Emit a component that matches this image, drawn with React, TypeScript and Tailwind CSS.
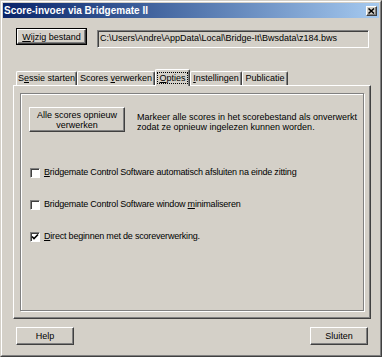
import React from 'react'

const font = { fontFamily: '"Liberation Sans", Arial, sans-serif' }

const raised =
  'border border-t-white border-l-white border-r-[#404040] border-b-[#404040] shadow-[inset_-1px_-1px_0_#808080] bg-[#d4d0c8]'

function Btn({ children, className = '' }: { children: React.ReactNode; className?: string }) {
  return (
    <div className={`${raised} flex items-center justify-center text-center leading-[10px] ${className}`}>
      {children}
    </div>
  )
}

function Check({ checked, children }: { checked?: boolean; children: React.ReactNode }) {
  return (
    <div className="flex items-center h-[12px]">
      <div className="w-[10px] h-[10px] bg-white border border-t-[#808080] border-l-[#808080] border-r-white border-b-white shadow-[inset_1px_1px_0_#404040] flex items-center justify-center">
        {checked && (
          <svg width="8" height="8" viewBox="0 0 8 8">
            <path d="M1 3.5 L3 5.5 L7 1.5" stroke="black" strokeWidth="1.6" fill="none" />
          </svg>
        )}
      </div>
      <span className="ml-[4px] tracking-[-0.2px]">{children}</span>
    </div>
  )
}

function Tab({ label, w, active }: { label: React.ReactNode; w: string; active?: boolean }) {
  return (
    <div
      className={`${w} border-t border-l border-t-white border-l-white border-r border-r-[#404040] shadow-[inset_-1px_0_0_#808080] rounded-t-[2px] bg-[#d4d0c8] flex items-center justify-center ${
        active ? 'h-[17px] relative z-10 -mb-px' : 'h-[14px] mt-[2px]'
      }`}
    >
      {active ? <span className="border border-dotted border-black px-[1px] leading-[10px]">{label}</span> : label}
    </div>
  )
}

export default function App() {
  return (
    <div
      style={font}
      className="w-[382px] h-[357px] bg-[#d4d0c8] text-[9px] text-black border border-t-[#d4d0c8] border-l-[#d4d0c8] border-r-[#404040] border-b-[#404040] overflow-hidden"
    >
      <div className="h-full border border-t-white border-l-white border-r-[#808080] border-b-[#808080] p-px flex flex-col">
        {/* title bar */}
        <div className="h-[15px] bg-gradient-to-r from-[#0a246a] to-[#a6caf0] flex items-center justify-between pl-[1px] pr-[2px]">
          <span className="text-white font-bold text-[10px] leading-none">Score-invoer via Bridgemate II</span>
          <div className={`${raised} w-[11px] h-[10px] flex items-center justify-center`}>
            <svg width="7" height="6" viewBox="0 0 7 6">
              <path d="M0.5 0.5 L6 5.5 M6 0.5 L0.5 5.5" stroke="black" strokeWidth="1.5" />
            </svg>
          </div>
        </div>

        {/* file row */}
        <div className="flex items-start mt-[10px] ml-[13px]">
          <div className="border border-black">
            <Btn className="w-[69px] h-[15px]">
              <span>
                <span className="underline">W</span>ijzig bestand
              </span>
            </Btn>
          </div>
          <div className="ml-[10px] mt-[2px] w-[272px] h-[18px] border border-t-[#808080] border-l-[#808080] border-r-white border-b-white shadow-[inset_1px_1px_0_#404040] flex items-center pl-[2px]">
            C:\Users\Andre\AppData\Local\Bridge-It\Bwsdata\z184.bws
          </div>
        </div>

        {/* tabs */}
        <div className="flex items-start mt-[21px] ml-[13px] h-[16px]">
          <Tab
            w="w-[61px]"
            label={
              <span>
                S<span className="underline">e</span>ssie starten
              </span>
            }
          />
          <Tab
            w="w-[78px]"
            label={
              <span>
                Scores <span className="underline">v</span>erwerken
              </span>
            }
          />
          <Tab
            w="w-[35px]"
            active
            label={
              <span>
                <span className="underline">O</span>pties
              </span>
            }
          />
          <Tab
            w="w-[52px]"
            label={
              <span>
                <span className="underline">I</span>nstellingen
              </span>
            }
          />
          <Tab w="w-[46px]" label="Publicatie" />
        </div>

        {/* panel */}
        <div className="ml-[10px] w-[358px] h-[234px] border border-t-white border-l-white border-r-[#404040] border-b-[#404040] shadow-[inset_-1px_-1px_0_#808080] pt-[7px] pl-[6px]">
          <div className="w-[344px] h-[218px] border border-[#808080] shadow-[1px_1px_0_white,inset_1px_1px_0_white] pl-[8px] pt-[13px]">
            <div className="flex items-start">
              <Btn className="w-[96px] h-[25px]">
                Alle scores opnieuw
                <br />
                verwerken
              </Btn>
              <div className="ml-[12px] mt-[5px] leading-[10px]">
                Markeer alle scores in het scorebestand als onverwerkt
                <br />
                zodat ze opnieuw ingelezen kunnen worden.
              </div>
            </div>
            <div className="flex flex-col gap-[20px] mt-[35px] ml-[1px]">
              <Check>
                <span className="underline">B</span>ridgemate Control Software automatisch afsluiten na einde zitting
              </Check>
              <Check>
                Bridgemate Control Software window <span className="underline">m</span>inimaliseren
              </Check>
              <Check checked>
                <span className="underline">D</span>irect beginnen met de scoreverwerking.
              </Check>
            </div>
          </div>
        </div>

        {/* bottom buttons */}
        <div className="flex justify-between mt-[8px] ml-[13px] mr-[11px]">
          <Btn className="w-[58px] h-[18px]">Help</Btn>
          <Btn className="w-[58px] h-[18px]">Sluiten</Btn>
        </div>
      </div>
    </div>
  )
}
